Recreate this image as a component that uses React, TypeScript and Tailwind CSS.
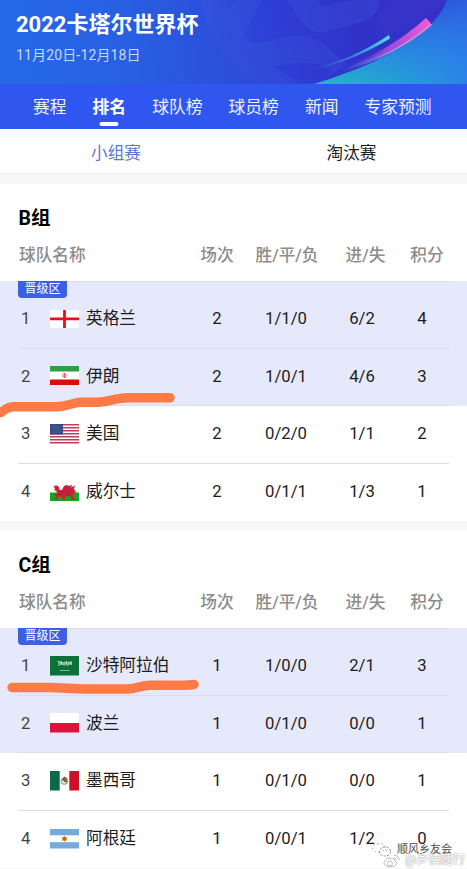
import React from 'react';

interface Team {
  name: string;
  flag: React.ReactNode;
  stats: string[];
}

interface Group {
  title: string;
  teams: Team[];
  mark: React.ReactNode;
}

const STRIPES = [0, 2, 4, 6, 8, 10, 12];

const England = () => (
  <>
    <rect width="29" height="18" y="1" fill="#fff" />
    <path d="M0 9.8h29M14.5 1v18" stroke="#e8111b" strokeWidth="2.8" />
  </>
);

const Iran = () => (
  <>
    <rect width="29" height="19" fill="#fff" />
    <rect width="29" height="5.5" fill="#2f9e49" />
    <rect width="29" height="5.5" y="13.5" fill="#da0d0d" />
    <circle cx="14.5" cy="9.5" r="1.8" fill="none" stroke="#e05a5a" strokeWidth="0.9" />
    <path d="M14.5 7v5" stroke="#d94444" strokeWidth="0.9" />
  </>
);

const Usa = () => (
  <>
    <rect width="29" height="19.5" fill="#fff" />
    {STRIPES.map((n) => (
      <rect key={n} width="29" height="1.5" y={n * 1.5} fill="#bd3d55" />
    ))}
    <rect width="13" height="10.5" fill="#31497f" />
    <path
      d="M1.5 2h11M2.5 4h10M1.5 6h11M2.5 8h10"
      stroke="#8296bf"
      strokeWidth="0.7"
      strokeDasharray="0.8 1.2"
    />
  </>
);

const Wales = () => (
  <>
    <rect width="29" height="10.5" fill="#fff" />
    <rect width="29" height="8.5" y="10.5" fill="#13a81f" />
    <path
      d="M3.5 4L7 3.5L9 5L9.5 8L12 8L14 4L17 3L19 4L22 2.5L21 5.5L25 3.5L24 7L26.5 11L24 10L25.5 13L22.5 12L23 15L26 17.5H21L20 14L16 14L15 17.5H11.5L12.5 15L9 14.5L7.5 17.5L4 17L6.5 14.5L4 12.5L7.5 11.5L6 8.5L4 8.5L5 6.5z"
      fill="#cf1f3a"
    />
    <path d="M10.5 9.5l4 .5M16 5.5l1 4M20.5 6l-1 4M8 12l4 1M17 12l4 1" stroke="#8c1a2c" strokeWidth="0.8" />
  </>
);

const Saudi = () => (
  <>
    <rect width="29" height="19.5" fill="#0c7138" />
    <path
      d="M7.5 5.5h2.5v3.5H8M11.5 5v4M13 6v3h2V5.5M16.5 5v4h2V6M20 5v4M21.5 5.5V9M8 7h13"
      fill="none"
      stroke="#c4dfcf"
      strokeWidth="0.9"
    />
    <path d="M9.5 14.5h10" stroke="#8cc2a3" strokeWidth="0.9" />
  </>
);

const Poland = () => (
  <>
    <rect width="29" height="10" fill="#fff" />
    <rect width="29" height="9.5" y="10" fill="#dc143c" />
  </>
);

const Mexico = () => (
  <>
    <rect width="29" height="19.5" fill="#fff" />
    <rect width="9.7" height="19.5" fill="#0b6848" />
    <rect width="9.7" height="19.5" x="19.3" fill="#ce1126" />
    <path d="M11.5 8.5a3.2 3.2 0 1 0 6 1" fill="none" stroke="#7fa98b" strokeWidth="1.3" />
    <path d="M11.5 8l3-2.500 3 2-.5 4-3-.5z" fill="#8a6040" />
  </>
);

const Argentina = () => (
  <>
    <rect width="29" height="19.5" fill="#fff" />
    <rect width="29" height="6.3" fill="#75aadb" />
    <rect width="29" height="6.3" y="13.2" fill="#75aadb" />
    <path d="M14.5 6.6l1 1.300 2 .2-.8 1.700.8 1.700-2 .2-1 1.300-1-1.300-2-.2.8-1.700-.8-1.700 2-.2z" fill="#e0a04a" />
    <circle cx="14.5" cy="9.8" r="1.7" fill="#b4622c" />
  </>
);

const GROUPS: Group[] = [
  {
    title: 'B组',
    teams: [
      { name: '英格兰', flag: <England />, stats: ['2', '1/1/0', '6/2', '4'] },
      { name: '伊朗', flag: <Iran />, stats: ['2', '1/0/1', '4/6', '3'] },
      { name: '美国', flag: <Usa />, stats: ['2', '0/2/0', '1/1', '2'] },
      { name: '威尔士', flag: <Wales />, stats: ['2', '0/1/1', '1/3', '1'] },
    ],
    mark: (
      <svg className="absolute top-[108px] left-0 h-[32px] w-[180px]" viewBox="0 0 180 32" fill="none">
        <path
          d="M1 23.5C6 19 9 17.8 14 17.8H57C67 17.5 72 13.5 81 13.3H98C109 12.8 115 9 128 8.800H170"
          stroke="#ff7a45"
          strokeWidth="9.5"
          strokeLinecap="round"
          strokeLinejoin="round"
        />
      </svg>
    ),
  },
  {
    title: 'C组',
    teams: [
      { name: '沙特阿拉伯', flag: <Saudi />, stats: ['1', '1/0/0', '2/1', '3'] },
      { name: '波兰', flag: <Poland />, stats: ['1', '0/1/0', '0/0', '1'] },
      { name: '墨西哥', flag: <Mexico />, stats: ['1', '0/1/0', '0/0', '1'] },
      { name: '阿根廷', flag: <Argentina />, stats: ['1', '0/0/1', '1/2', '0'] },
    ],
    mark: (
      <svg className="absolute top-[48px] left-0 h-[24px] w-[205px]" viewBox="0 0 205 24" fill="none">
        <path
          d="M12 11.5H50C66 12 74 13 88 13H128C138 12 141 9.5 150 9.300H180C187 9.3 190 8.8 194 8.5"
          stroke="#ff7a45"
          strokeWidth="9.5"
          strokeLinecap="round"
          strokeLinejoin="round"
        />
      </svg>
    ),
  },
];

const NAV = ['赛程', '排名', '球队榜', '球员榜', '新闻', '专家预测'];

const HeaderArt = () => (
  <svg className="absolute inset-0 h-full w-full" viewBox="0 0 467 84" fill="none">
    <defs>
      <linearGradient id="sky" x1="0" y1="40" x2="255" y2="0" gradientUnits="userSpaceOnUse">
        <stop stopColor="#2569e8" />
        <stop offset="0.5" stopColor="#285fe3" />
        <stop offset="1" stopColor="#2c48d8" />
      </linearGradient>
      <linearGradient id="sea" x1="310" y1="84" x2="467" y2="50" gradientUnits="userSpaceOnUse">
        <stop stopColor="#22c4bd" />
        <stop offset="0.45" stopColor="#24a4d4" />
        <stop offset="1" stopColor="#2b80ea" />
      </linearGradient>
      <linearGradient id="shade" x1="440" y1="0" x2="452" y2="84" gradientUnits="userSpaceOnUse">
        <stop stopColor="#2d58dd" />
        <stop offset="0.9" stopColor="#2b78e8" stopOpacity="0" />
      </linearGradient>
      <linearGradient id="ball" x1="205" y1="60" x2="420" y2="10" gradientUnits="userSpaceOnUse">
        <stop stopColor="#2c50de" />
        <stop offset="0.35" stopColor="#2e3ed4" />
        <stop offset="0.7" stopColor="#3032ca" />
        <stop offset="1" stopColor="#3530c8" />
      </linearGradient>
      <linearGradient id="pink" x1="345" y1="66" x2="430" y2="22" gradientUnits="userSpaceOnUse">
        <stop stopColor="#5a38d0" stopOpacity="0" />
        <stop offset="0.5" stopColor="#a04ad6" />
        <stop offset="1" stopColor="#f05cd8" />
      </linearGradient>
      <linearGradient id="pale" x1="350" y1="70" x2="432" y2="25" gradientUnits="userSpaceOnUse">
        <stop stopColor="#7fa0e8" stopOpacity="0.1" />
        <stop offset="0.5" stopColor="#94a0ea" />
        <stop offset="1" stopColor="#dc84e4" />
      </linearGradient>
      <linearGradient id="cyan" x1="310" y1="69" x2="390" y2="37" gradientUnits="userSpaceOnUse">
        <stop stopColor="#43a5e8" stopOpacity="0" />
        <stop offset="1" stopColor="#4ce4ee" />
      </linearGradient>
    </defs>
    <rect width="467" height="84" fill="url(#sky)" />
    <path d="M300 0H467V84H300z" fill="url(#sea)" />
    <path d="M300 0H467V84H300z" fill="url(#shade)" />
    <path d="M201 0C205 32 223 62 257 84H314C372 66 434 38 447 0z" fill="url(#ball)" />
    <path
      d="M201 0H227V9L237 0H261L245 31Q243 37 254 44L290 36Q313 34 327 47L348 64L314 84H257C223 62 205 32 201 0zM274 67L300 83H321L330 71Q315 57 274 67z"
      fill="#4568e6"
      fillOpacity="0.18"
      fillRule="evenodd"
    />
    <path d="M287 0L304 25Q312 34 326 32L365 21Q379 15 379 0H352L322 6L317 0z" fill="#4568e6" fillOpacity="0.2" />
    <path d="M397 0C380 10 374 21 377 40L400 30L432 12L447 0z" fill="#4038c8" fillOpacity="0.3" />
    <path d="M345 71Q396 56 432 25L428 21Q392 53 350 66z" fill="url(#pale)" />
    <path d="M345 66Q388 52 426 18L431 23.500Q392 57 345 68z" fill="url(#pink)" />
    <path d="M310 69Q350 61 389 35L390 38.5Q350 63 310 70z" fill="url(#cyan)" />
  </svg>
);

const Watermark = () => (
  <div className="absolute top-[841px] right-[2px] h-[28px] w-[93px]">
    <svg className="absolute top-[2px] left-0 h-[14px] w-[20px]" viewBox="0 0 20 14" fill="#fff" stroke="#666" strokeWidth="0.8">
      <ellipse cx="7" cy="5" rx="6.5" ry="4.5" strokeDasharray="1 3" />
      <ellipse cx="13" cy="8.5" rx="5.5" ry="4.5" strokeDasharray="2 1.5" />
      <path d="M11 7v1M14.5 7v1" />
    </svg>
    <svg className="absolute top-[13px] left-[11px] h-[14px] w-[17px]" viewBox="0 0 17 14" fill="#fff" stroke="#bbb">
      <path d="M7 4C4 3 1 7 1 9.5C2 14 13 14 14 9C14 7.5 12 7.5 11.5 7C12 4 9 4 7 5z" />
      <circle cx="7" cy="9.5" r="2.5" />
      <path d="M11 1.5Q15.5 1 16 6M11 4Q13.5 4 13.5 6" fill="none" />
    </svg>
    <span className="absolute top-[2px] left-[25px] text-[11px] leading-[13px] whitespace-nowrap text-[#4a4a4a]">
      顺风乡友会
    </span>
    <span className="absolute top-[13px] right-0 text-[12.2px] leading-[13px] whitespace-nowrap text-white [text-shadow:0_0_1px_#999,0_0_2px_#aaa]">
      @乡情随行
    </span>
  </div>
);

const GroupTable: React.FC<{ group: Group }> = ({ group }) => (
  <section className="mb-[9.5px] h-[337.3px] bg-white">
    <h2 className="pt-[20.4px] pl-[18.5px] text-[19.5px] leading-[29px] font-bold text-black">{group.title}</h2>
    <div className="mt-[9.6px] flex h-[38.3px] items-start text-[16.7px] leading-[27px] font-medium text-[#8c8c8c]">
      <span className="w-[191px] pl-[19px]">球队名称</span>
      <span className="w-[52px] text-center">场次</span>
      <span className="w-[88px] text-center">胜/平/负</span>
      <span className="w-[69px] text-center">进/失</span>
      <span className="w-[54px] text-center">积分</span>
    </div>
    <div className="relative">
      {group.teams.map((team, i) => (
        <div
          key={team.name}
          className={`flex items-end ${i === 0 ? 'h-[68px]' : 'h-[57.5px]'} ${i < 2 ? 'bg-[#e6e9fb]' : 'bg-white'}`}
        >
          <div
            className={`ml-[18px] flex h-[57.5px] w-[431px] items-center pb-[1.6px] text-[16.7px] text-[#1c1c1c] ${
              i < 3 ? 'border-b border-[#dcdde6]' : ''
            }`}
          >
            <span className="w-[31.7px] pl-[3px] text-[#444]">{i + 1}</span>
            <svg className="h-[20px] w-[29px]" viewBox="0 0 29 20">
              {team.flag}
            </svg>
            <span className="w-[94.3px] pl-[7.3px] whitespace-nowrap">{team.name}</span>
            <span className="ml-[18px] w-[52px] text-center">{team.stats[0]}</span>
            <span className="w-[86px] text-center">{team.stats[1]}</span>
            <span className="w-[66px] text-center">{team.stats[2]}</span>
            <span className="w-[54px] text-center">{team.stats[3]}</span>
          </div>
        </div>
      ))}
      <i className="absolute top-0 left-[18px] h-px w-[431px] bg-[#dcdde6]" />
      <span className="absolute top-0 left-[18px] h-[17px] w-[49px] rounded-b-[4px] bg-[#3c5fe3] text-center text-[12px] leading-[16px] text-white">
        晋级区
      </span>
      {group.mark}
    </div>
  </section>
);

export default function App() {
  return (
    <div className="relative h-[869px] w-[467px] overflow-hidden bg-[#f7f7f7] font-[Roboto,'Noto_Sans_CJK_SC',sans-serif]">
      <header className="relative h-[84px] pt-[9px] pl-[16px] text-white">
        <HeaderArt />
        <h1 className="relative text-[22px] leading-[32px] font-bold">2022卡塔尔世界杯</h1>
        <p className="relative mt-[4px] text-[14px] leading-[20px] tracking-[0.15px] text-[#c9d8fa]">11月20日-12月18日</p>
      </header>
      <nav className="flex h-[45px] gap-[26px] bg-[#3056f0] pl-[33px] text-[16.8px] leading-[47px] text-[#eef2ff]">
        {NAV.map((item) => (
          <span key={item} className={`relative whitespace-nowrap ${item === '排名' ? 'font-bold text-white' : ''}`}>
            {item}
            {item === '排名' && (
              <i className="absolute bottom-[3px] left-1/2 h-[4px] w-[19px] -translate-x-1/2 rounded-full bg-white" />
            )}
          </span>
        ))}
      </nav>
      <div className="mb-[9.5px] flex h-[45px] border-b border-[#efefef] bg-white text-center text-[16.6px] leading-[49px]">
        <span className="w-[232px] text-[#5b76cf]">小组赛</span>
        <span className="w-[235px] pl-[4px] text-[#222]">淘汰赛</span>
      </div>
      {GROUPS.map((group) => (
        <GroupTable key={group.title} group={group} />
      ))}
      <Watermark />
    </div>
  );
}
